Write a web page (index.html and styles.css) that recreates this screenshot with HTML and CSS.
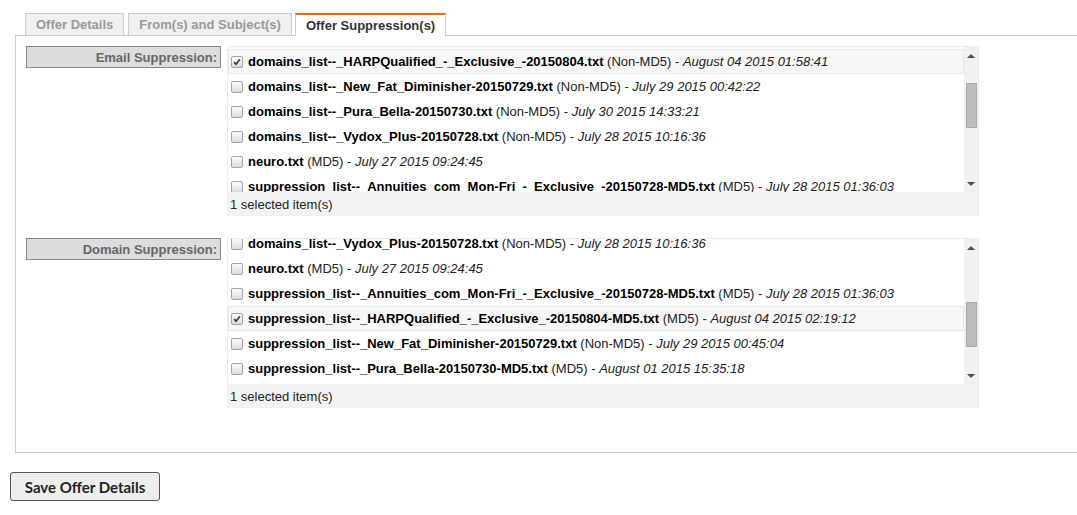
FILE: index.html
```html
<!DOCTYPE html>
<html lang="en">
<head>
  <meta charset="UTF-8" />
  <title>Offer Suppression(s)</title>
  <link rel="stylesheet" href="styles.css">
</head>
<body>

<div class="page">

  <div class="tabs">
    <a class="tab">Offer Details</a>
    <a class="tab">From(s) and Subject(s)</a>
    <a class="tab active">Offer Suppression(s)</a>
  </div>

  <div class="panel">

    <!-- Email suppression -->
    <div class="field">
      <div class="field-label">Email Suppression:</div>
      <div class="picker">
        <div class="picker-body">
          <div class="picker-list" id="email-list">
            <div class="row selected"><span class="check on"><svg viewBox="0 0 12 12"><path d="M2.5 6.2 L4.8 8.6 L9.6 2.6" /></svg></span><b>domains_list--_HARPQualified_-_Exclusive_-20150804.txt</b>&nbsp;(Non-MD5) -&nbsp;<i>August 04 2015 01:58:41</i></div>
            <div class="row"><span class="check"></span><b>domains_list--_New_Fat_Diminisher-20150729.txt</b>&nbsp;(Non-MD5) -&nbsp;<i>July 29 2015 00:42:22</i></div>
            <div class="row"><span class="check"></span><b>domains_list--_Pura_Bella-20150730.txt</b>&nbsp;(Non-MD5) -&nbsp;<i>July 30 2015 14:33:21</i></div>
            <div class="row"><span class="check"></span><b>domains_list--_Vydox_Plus-20150728.txt</b>&nbsp;(Non-MD5) -&nbsp;<i>July 28 2015 10:16:36</i></div>
            <div class="row"><span class="check"></span><b>neuro.txt</b>&nbsp;(MD5) -&nbsp;<i>July 27 2015 09:24:45</i></div>
            <div class="row"><span class="check"></span><b>suppression_list--_Annuities_com_Mon-Fri_-_Exclusive_-20150728-MD5.txt</b>&nbsp;(MD5) -&nbsp;<i>July 28 2015 01:36:03</i></div>
            <div class="row"><span class="check"></span><b>suppression_list--_HARPQualified_-_Exclusive_-20150804-MD5.txt</b>&nbsp;(MD5) -&nbsp;<i>August 04 2015 02:19:12</i></div>
            <div class="row"><span class="check"></span><b>suppression_list--_New_Fat_Diminisher-20150729.txt</b>&nbsp;(Non-MD5) -&nbsp;<i>July 29 2015 00:45:04</i></div>
            <div class="row"><span class="check"></span><b>suppression_list--_Pura_Bella-20150730-MD5.txt</b>&nbsp;(MD5) -&nbsp;<i>August 01 2015 15:35:18</i></div>
          </div>
          <div class="scrollbar">
            <div class="sb-btn"><span class="arrow-up"></span></div>
            <div class="sb-track"><div class="sb-thumb" style="margin-top: 19px"></div></div>
            <div class="sb-btn"><span class="arrow-down"></span></div>
          </div>
        </div>
        <div class="picker-footer">1 selected item(s)</div>
      </div>
    </div>

    <!-- Domain suppression -->
    <div class="field">
      <div class="field-label">Domain Suppression:</div>
      <div class="picker">
        <div class="picker-body">
          <div class="picker-list" id="domain-list">
            <div class="row"><span class="check"></span><b>domains_list--_HARPQualified_-_Exclusive_-20150804.txt</b>&nbsp;(Non-MD5) -&nbsp;<i>August 04 2015 01:58:41</i></div>
            <div class="row"><span class="check"></span><b>domains_list--_New_Fat_Diminisher-20150729.txt</b>&nbsp;(Non-MD5) -&nbsp;<i>July 29 2015 00:42:22</i></div>
            <div class="row"><span class="check"></span><b>domains_list--_Pura_Bella-20150730.txt</b>&nbsp;(Non-MD5) -&nbsp;<i>July 30 2015 14:33:21</i></div>
            <div class="row"><span class="check"></span><b>domains_list--_Vydox_Plus-20150728.txt</b>&nbsp;(Non-MD5) -&nbsp;<i>July 28 2015 10:16:36</i></div>
            <div class="row"><span class="check"></span><b>neuro.txt</b>&nbsp;(MD5) -&nbsp;<i>July 27 2015 09:24:45</i></div>
            <div class="row"><span class="check"></span><b>suppression_list--_Annuities_com_Mon-Fri_-_Exclusive_-20150728-MD5.txt</b>&nbsp;(MD5) -&nbsp;<i>July 28 2015 01:36:03</i></div>
            <div class="row selected"><span class="check on"><svg viewBox="0 0 12 12"><path d="M2.5 6.2 L4.8 8.6 L9.6 2.6" /></svg></span><b>suppression_list--_HARPQualified_-_Exclusive_-20150804-MD5.txt</b>&nbsp;(MD5) -&nbsp;<i>August 04 2015 02:19:12</i></div>
            <div class="row"><span class="check"></span><b>suppression_list--_New_Fat_Diminisher-20150729.txt</b>&nbsp;(Non-MD5) -&nbsp;<i>July 29 2015 00:45:04</i></div>
            <div class="row"><span class="check"></span><b>suppression_list--_Pura_Bella-20150730-MD5.txt</b>&nbsp;(MD5) -&nbsp;<i>August 01 2015 15:35:18</i></div>
          </div>
          <div class="scrollbar">
            <div class="sb-btn"><span class="arrow-up"></span></div>
            <div class="sb-track"><div class="sb-thumb" style="margin-top: 46px"></div></div>
            <div class="sb-btn"><span class="arrow-down"></span></div>
          </div>
        </div>
        <div class="picker-footer">1 selected item(s)</div>
      </div>
    </div>

  </div>

  <button class="save-btn">Save Offer Details</button>

</div>

<script>
  // second list is scrolled down to the selected file
  document.getElementById("domain-list").scrollTop = 85;
</script>

</body>
</html>
```

FILE: styles.css
```css
html, body {
  overflow: hidden;
}
body {
  font-family: "Liberation Sans", Arial, sans-serif;
  font-size: 13px;
  color: #000;
  background: #fff;
  margin: 0;
}
.page {
  padding: 13px 0 0 15px;
}

/* tabs */
.tabs {
  display: flex;
  align-items: flex-end;
  gap: 4px;
  padding-left: 10px;
}
.tab {
  box-sizing: border-box;
  height: 22px;
  line-height: 22px;
  padding: 0 10px;
  border: 1px solid #ccc;
  border-bottom: none;
  background: #f0f0f0;
  color: #999;
  font-weight: bold;
  cursor: pointer;
}
.tab.active {
  position: relative;
  z-index: 1;
  height: 23px;
  margin-bottom: -1px;
  margin-left: -1px;
  line-height: 21px;
  border-top: 2px solid #f60;
  background: #fff;
  color: #333;
}

/* panel */
.panel {
  border: 1px solid #ccc;
  border-right: none;
  padding: 10px 0 44px 10px;
}
.field {
  display: flex;
  align-items: flex-start;
  gap: 6px;
}
.field + .field {
  margin-top: 22px;
}
.field-label {
  box-sizing: border-box;
  width: 195px;
  height: 22px;
  line-height: 21px;
  padding-right: 3px;
  text-align: right;
  background: #ddd;
  border: 1px solid #888;
  color: #666;
  font-weight: bold;
}

/* file picker */
.picker {
  box-sizing: border-box;
  width: 752px;
  border: 1px solid #eee;
  background: #f2f2f2;
}
.picker-body {
  display: flex;
  height: 145px;
  background: #fff;
}
.picker-list {
  flex: 1;
  overflow: hidden;
  padding: 2px 0 10px;
}
.row {
  box-sizing: border-box;
  display: flex;
  align-items: center;
  height: 25px;
  padding-left: 2px;
  border: 1px solid transparent;
  white-space: nowrap;
  color: #222;
}
.row b {
  color: #000;
}
.row.selected {
  background: #f7f7f7;
  border-color: #e8e8e8;
}
.check {
  box-sizing: border-box;
  flex: none;
  width: 12px;
  height: 12px;
  margin-right: 5px;
  border: 1px solid #a3a3a3;
  border-radius: 2px;
  background: linear-gradient(#fcfcfc, #dcdcdc);
}
.check svg {
  display: block;
  width: 10px;
  height: 10px;
}
.check svg path {
  fill: none;
  stroke: #3a3a3a;
  stroke-width: 2;
}
.picker-footer {
  box-sizing: border-box;
  height: 23px;
  padding: 1px 0 0 2px;
  line-height: 24px;
  color: #222;
}

/* scrollbar */
.scrollbar {
  display: flex;
  flex-direction: column;
  width: 14px;
  background: #f1f1f1;
}
.sb-btn {
  height: 17px;
  display: flex;
  align-items: center;
  justify-content: center;
}
.arrow-up {
  border-left: 4px solid transparent;
  border-right: 4px solid transparent;
  border-bottom: 4px solid #505050;
}
.arrow-down {
  border-left: 4px solid transparent;
  border-right: 4px solid transparent;
  border-top: 4px solid #505050;
}
.sb-track {
  flex: 1;
  padding: 0 1px 0 2px;
}
.sb-thumb {
  box-sizing: border-box;
  height: 45px;
  background: #bdbdbd;
  border: 1px solid #a8a8a8;
}

/* button */
.save-btn {
  display: block;
  box-sizing: border-box;
  width: 150px;
  height: 29px;
  margin: 19px 0 0 -5px;
  background: #eee;
  border: 1px solid #555;
  border-radius: 3px;
  font-family: Lato, "Liberation Sans", sans-serif;
  font-size: 15px;
  font-weight: bold;
  color: #222;
  cursor: pointer;
}
```
